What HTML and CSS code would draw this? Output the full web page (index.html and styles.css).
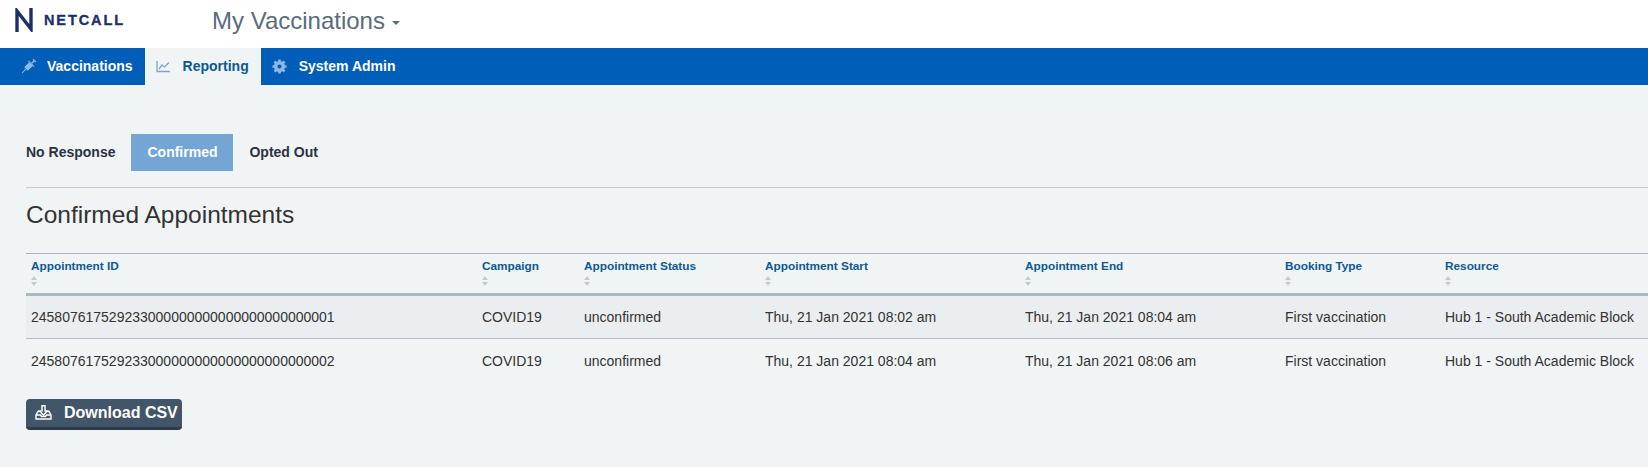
FILE: index.html
```html
<!DOCTYPE html>
<html lang="en">
<head>
<meta charset="utf-8">
<title>My Vaccinations</title>
<link rel="stylesheet" href="styles.css">
</head>
<body>
<header class="top">
  <div class="logo">
    <svg class="logo-n" width="18" height="24" viewBox="0 0 18 24"><path d="M2 24V3L16 21V0" fill="none" stroke="#1b2f6b" stroke-width="3.400"/></svg>
    <span class="logo-text">NETCALL</span>
  </div>
  <div class="app">My Vaccinations <span class="caret"></span></div>
</header>
<nav class="nav">
  <a class="tab first">
    <svg class="ico" width="15" height="15" viewBox="0 0 15 15"><g transform="rotate(45 7.500 7.500)" fill="#8fb8e4"><rect x="5" y="4" width="5" height="7" rx="0.500"/><rect x="3.500" y="3" width="8" height="1.200"/><rect x="6.800" y="-1" width="1.400" height="4"/><rect x="5.500" y="-1.500" width="4" height="1.200"/><rect x="7" y="11" width="1" height="5.500"/></g></svg>
    Vaccinations</a>
  <a class="tab active">
    <svg class="ico" width="15" height="15" viewBox="0 0 15 15"><path d="M1 2v10.500h13M3 10l3-4 2.500 2L13 3.500" fill="none" stroke="#7fa6cc" stroke-width="1.300"/></svg>
    Reporting</a>
  <a class="tab">
    <svg class="ico" width="15" height="15" viewBox="0 0 15 15"><circle cx="7.500" cy="7.500" r="3.800" fill="none" stroke="#8fb8e4" stroke-width="3.400"/><path d="M7.500 0.500v3M7.500 11.500v3M0.500 7.500h3M11.500 7.500h3M2.500 2.500l2 2M10.500 10.500l2 2M2.500 12.500l2-2M10.500 4.500l2-2" stroke="#8fb8e4" stroke-width="2.600"/></svg>
    System Admin</a>
</nav>
<main class="main">
  <div class="pills">
    <a class="pill">No Response</a>
    <a class="pill on">Confirmed</a>
    <a class="pill">Opted Out</a>
  </div>
  <h1 class="title">Confirmed Appointments</h1>
  <table class="grid">
    <colgroup>
      <col class="c1"><col class="c2"><col class="c3"><col class="c4"><col class="c5"><col class="c6"><col class="c7">
    </colgroup>
    <thead>
      <tr>
        <th>Appointment ID<span class="sort"></span></th>
        <th>Campaign<span class="sort"></span></th>
        <th>Appointment Status<span class="sort"></span></th>
        <th>Appointment Start<span class="sort"></span></th>
        <th>Appointment End<span class="sort"></span></th>
        <th>Booking Type<span class="sort"></span></th>
        <th>Resource<span class="sort"></span></th>
      </tr>
    </thead>
    <tbody>
      <tr class="odd">
        <td>245807617529233000000000000000000000001</td><td>COVID19</td><td>unconfirmed</td><td>Thu, 21 Jan 2021 08:02 am</td><td>Thu, 21 Jan 2021 08:04 am</td><td>First vaccination</td><td>Hub 1 - South Academic Block</td>
      </tr>
      <tr>
        <td>245807617529233000000000000000000000002</td><td>COVID19</td><td>unconfirmed</td><td>Thu, 21 Jan 2021 08:04 am</td><td>Thu, 21 Jan 2021 08:06 am</td><td>First vaccination</td><td>Hub 1 - South Academic Block</td>
      </tr>
    </tbody>
  </table>
  <button class="btn">
    <svg class="btn-ico" width="17" height="15" viewBox="0 0 17 15"><path d="M7 0.800h3V6h2.500l-4 4-4-4H7zM4.500 6.500H3L1 10v4h15v-4l-2-3.500h-1.500M1 10h4.500l1 1.500h4l1-1.500H16" fill="none" stroke="#fff" stroke-width="1.400"/></svg>
    Download CSV</button>
</main>
</body>
</html>
```

FILE: styles.css
```css
* { box-sizing: border-box; }
html, body { margin: 0; height: 100%; overflow: hidden; }
body { background: #f0f4f5; font-family: "Liberation Sans", Arial, sans-serif; color: #333; }
.top { height: 48px; background: #fff; display: flex; align-items: center; }
.logo { width: 212px; display: flex; align-items: center; padding-left: 15px; }
.logo-n { margin-top: -8px; flex: none; }
.logo-text { font-size: 14.500px; font-weight: 700; letter-spacing: 1.900px; color: #1b2f6b; margin-left: 11px; margin-top: -8px; -webkit-text-stroke: 0.300px #1b2f6b; }
.app { font-size: 24px; color: #5a6b7d; margin-top: -6px; }
.caret { display: inline-block; width: 0; height: 0; border: 4px solid transparent; border-top-color: #5a6b7d; border-bottom: 0; vertical-align: middle; }
.nav { height: 37px; background: #005eb8; display: flex; }
.tab { display: flex; align-items: center; gap: 12px; padding: 0 13px 1px 11px; font-size: 14px; font-weight: 700; color: #fff; }
.tab.first { padding-left: 21px; padding-right: 12px; gap: 11px; }
.tab.active { background: #f0f4f5; color: #0b5a94; padding-right: 12px; }
.ico { flex: none; }
.main { padding: 49px 0 0 26px; }
.pills { display: flex; height: 37px; }
.pill { display: flex; align-items: center; padding: 0 16px 2px; font-size: 14px; font-weight: 700; color: #2a333d; }
.pill:first-child { padding-left: 0; }
.pill.on { background: #73a5d5; color: #fff; }
.title { margin: 16px 0 0; padding-top: 13px; border-top: 1px solid #c3ccd2; font-size: 24.500px; font-weight: 400; line-height: 28px; color: #333; height: 66px; }
.grid { border-collapse: collapse; width: 1622px; table-layout: fixed; border-top: 1px solid #a9b6bf; }
.c1 { width: 451px; } .c2 { width: 102px; } .c3 { width: 181px; } .c4 { width: 260px; } .c5 { width: 260px; } .c6 { width: 160px; } .c7 { width: 208px; }
th { text-align: left; vertical-align: top; padding: 5px 5px 0; height: 41px; font-size: 11.800px; font-weight: 700; color: #0b5a94; border-bottom: 3px solid #a9b9c4; }
.sort { display: block; width: 7px; height: 10px; margin-top: 3px; position: relative; }
.sort::before, .sort::after { content: ""; position: absolute; left: 0; width: 0; height: 0; border-left: 3.500px solid transparent; border-right: 3.500px solid transparent; }
.sort::before { top: 0; border-bottom: 4px solid #c2cad0; }
.sort::after { bottom: 0; border-top: 4px solid #c2cad0; }
td { height: 44px; padding: 0 5px; font-size: 14px; color: #333; white-space: nowrap; overflow: hidden; }
.odd td { background: #ebeef0; border-bottom: 1px solid #b4bfc6; }
.btn { display: flex; align-items: center; gap: 12px; margin-top: 16px; width: 156px; height: 31px; padding: 0 0 0 9px; border: 0; border-bottom: 3px solid #2c3b47; border-radius: 4px; background: #42566a; color: #fff; font-family: inherit; font-size: 16px; font-weight: 700; white-space: nowrap; }
.btn-ico { flex: none; }
```
